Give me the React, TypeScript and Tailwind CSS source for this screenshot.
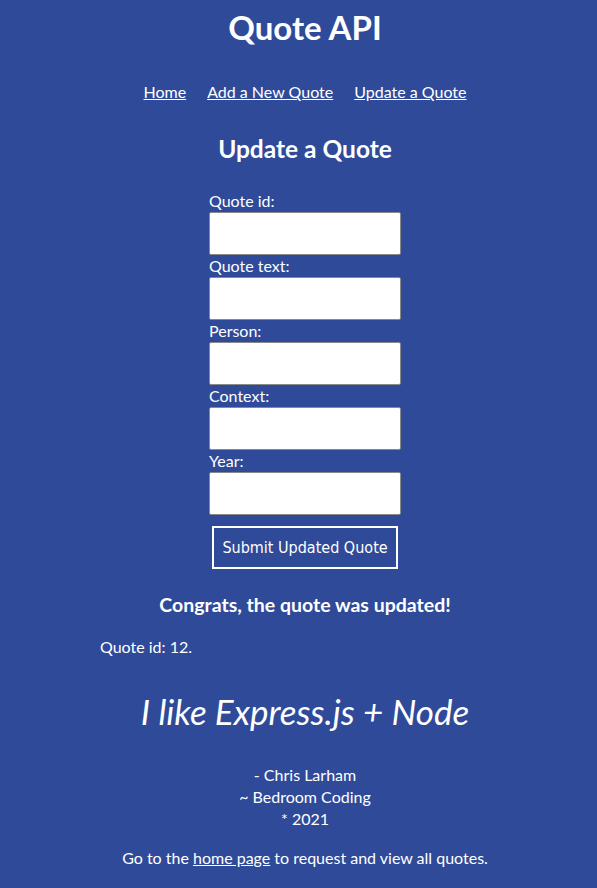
import React from 'react';

const fields = ['Quote id:', 'Quote text:', 'Person:', 'Context:', 'Year:'];

const App: React.FC = () => {
  return (
    <div className="min-h-[888px] bg-[#2f4a99] text-white font-['Lato','Noto_Sans',sans-serif] text-[16px] pl-[13px]">
      {/* Header */}
      <h1 className="text-center text-[33px] font-bold leading-[40px] pt-[7px]">Quote API</h1>

      <nav className="flex justify-center gap-[21px] mt-[34px] leading-[22px]">
        <a href="#" className="underline">Home</a>
        <a href="#" className="underline">Add a New Quote</a>
        <a href="#" className="underline">Update a Quote</a>
      </nav>

      <h2 className="text-center text-[24.5px] font-bold mt-[31px] leading-[30px]">Update a Quote</h2>

      {/* Form */}
      <form className="flex flex-col items-center mt-[26px]">
        <div className="flex flex-col w-[192px]">
          {fields.map(label => (
            <div key={label} className="flex flex-col">
              <label className="leading-[22px] h-[22px]">{label}</label>
              <input className="h-[43px] w-[192px] bg-white border border-[#8a8a8a] rounded-[2px] text-black" />
            </div>
          ))}
        </div>
        <button
          type="button"
          className="mt-[11px] w-[186px] h-[43px] border-2 border-white text-[16px] font-['DejaVu_Sans_Condensed','Liberation_Sans',sans-serif]"
        >
          Submit Updated Quote
        </button>
      </form>

      <h3 className="text-center text-[19.5px] font-bold mt-[24px] leading-[24px]">Congrats, the quote was updated!</h3>

      <p className="pl-[87px] mt-[19px] leading-[22px]">Quote id: 12.</p>

      <p className="text-center italic text-[35px] leading-[40px] mt-[33px]">I like Express.js + Node</p>

      <div className="text-center leading-[22px] mt-[33px]">
        <p>- Chris Larham</p>
        <p>~ Bedroom Coding</p>
        <p>* 2021</p>
      </div>

      <p className="text-center leading-[22px] mt-[17px]">
        Go to the <a href="#" className="underline">home page</a> to request and view all quotes.
      </p>
    </div>
  );
};

export default App;
